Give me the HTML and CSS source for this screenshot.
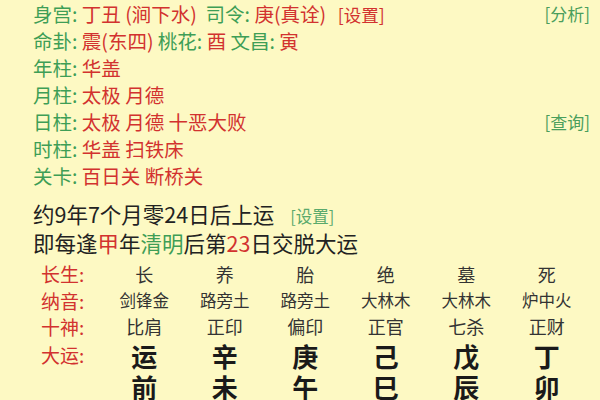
FILE: index.html
```html
<!DOCTYPE html>
<html lang="zh">
<head>
<meta charset="utf-8">
<link rel="stylesheet" href="styles.css">
</head>
<body>
<div class="page">
  <div class="info">
    <div class="line"><span class="link">[分析]</span><span class="g">身宫:</span> <span class="r">丁丑 (涧下水)</span>&nbsp; <span class="g">司令:</span> <span class="r">庚(真诠)</span>&nbsp; <span class="r small">[设置]</span></div>
    <div class="line"><span class="g">命卦:</span> <span class="r">震(东四)</span> <span class="g">桃花:</span> <span class="r">酉</span> <span class="g">文昌:</span> <span class="r">寅</span></div>
    <div class="line"><span class="g">年柱:</span> <span class="r">华盖</span></div>
    <div class="line"><span class="g">月柱:</span> <span class="r">太极 月德</span></div>
    <div class="line"><span class="link">[查询]</span><span class="g">日柱:</span> <span class="r">太极 月德 十恶大败</span></div>
    <div class="line"><span class="g">时柱:</span> <span class="r">华盖 扫铁床</span></div>
    <div class="line"><span class="g">关卡:</span> <span class="r">百日关 断桥关</span></div>
  </div>
  <div class="luck">
    <div class="lline">约9年7个月零24日后上运<span class="set">[设置]</span></div>
    <div class="lline">即每逢<span class="r">甲</span>年<span class="g">清明</span>后第<span class="r">23</span>日交脱大运</div>
  </div>
  <div class="table">
    <div class="lab">长生:</div><div class="c1">长</div><div class="c1">养</div><div class="c1">胎</div><div class="c1">绝</div><div class="c1">墓</div><div class="c1">死</div>
    <div class="lab">纳音:</div><div class="c2">剑锋金</div><div class="c2">路旁土</div><div class="c2">路旁土</div><div class="c2">大林木</div><div class="c2">大林木</div><div class="c2">炉中火</div>
    <div class="lab">十神:</div><div class="c1">比肩</div><div class="c1">正印</div><div class="c1">偏印</div><div class="c1">正官</div><div class="c1">七杀</div><div class="c1">正财</div>
    <div class="lab">大运:</div><div class="dy">运</div><div class="dy">辛</div><div class="dy">庚</div><div class="dy">己</div><div class="dy">戊</div><div class="dy">丁</div>
    <div class="lab"></div><div class="dy">前</div><div class="dy">未</div><div class="dy">午</div><div class="dy">巳</div><div class="dy">辰</div><div class="dy">卯</div>
  </div>
</div>
</body>
</html>
```
FILE: styles.css
```css
html, body {
  margin: 0;
  padding: 0;
  background: #fdf9c3;
  overflow: hidden;
}
body {
  width: 600px;
  height: 400px;
  font-family: "Noto Sans CJK SC", "Noto Sans", sans-serif;
  color: #222;
}
.info {
  padding-left: 33px;
  padding-right: 10px;
  font-size: 19.5px;
}
.line {
  height: 27px;
  line-height: 27px;
  white-space: nowrap;
}
.g { color: #3e9e56; }
.r { color: #d2322f; }
.small { font-size: 17.5px; margin-left: 3px; }
.link {
  float: right;
  color: #4a9e5c;
  font-size: 17px;
}
.luck {
  margin-top: 10px;
  padding-left: 33px;
  font-size: 21.5px;
  color: #222;
}
.lline {
  height: 29px;
  line-height: 29px;
  white-space: nowrap;
}
.set {
  color: #5aaa6c;
  font-size: 16.5px;
  margin-left: 16px;
}
.table {
  margin-top: 4px;
  display: grid;
  grid-template-columns: 104px repeat(6, 80.5px);
  grid-template-rows: 27px 26px 26px 31px 32px;
  align-items: center;
}
.lab {
  color: #d2322f;
  font-size: 19px;
  padding-left: 41px;
  line-height: 1.2;
}
.c1 {
  text-align: center;
  font-size: 18px;
  color: #333;
  line-height: 1.2;
}
.c2 {
  text-align: center;
  font-size: 16.5px;
  color: #333;
  line-height: 1.2;
}
.dy {
  text-align: center;
  font-size: 26px;
  font-weight: bold;
  color: #1a1a1a;
  line-height: 1;
}
```
